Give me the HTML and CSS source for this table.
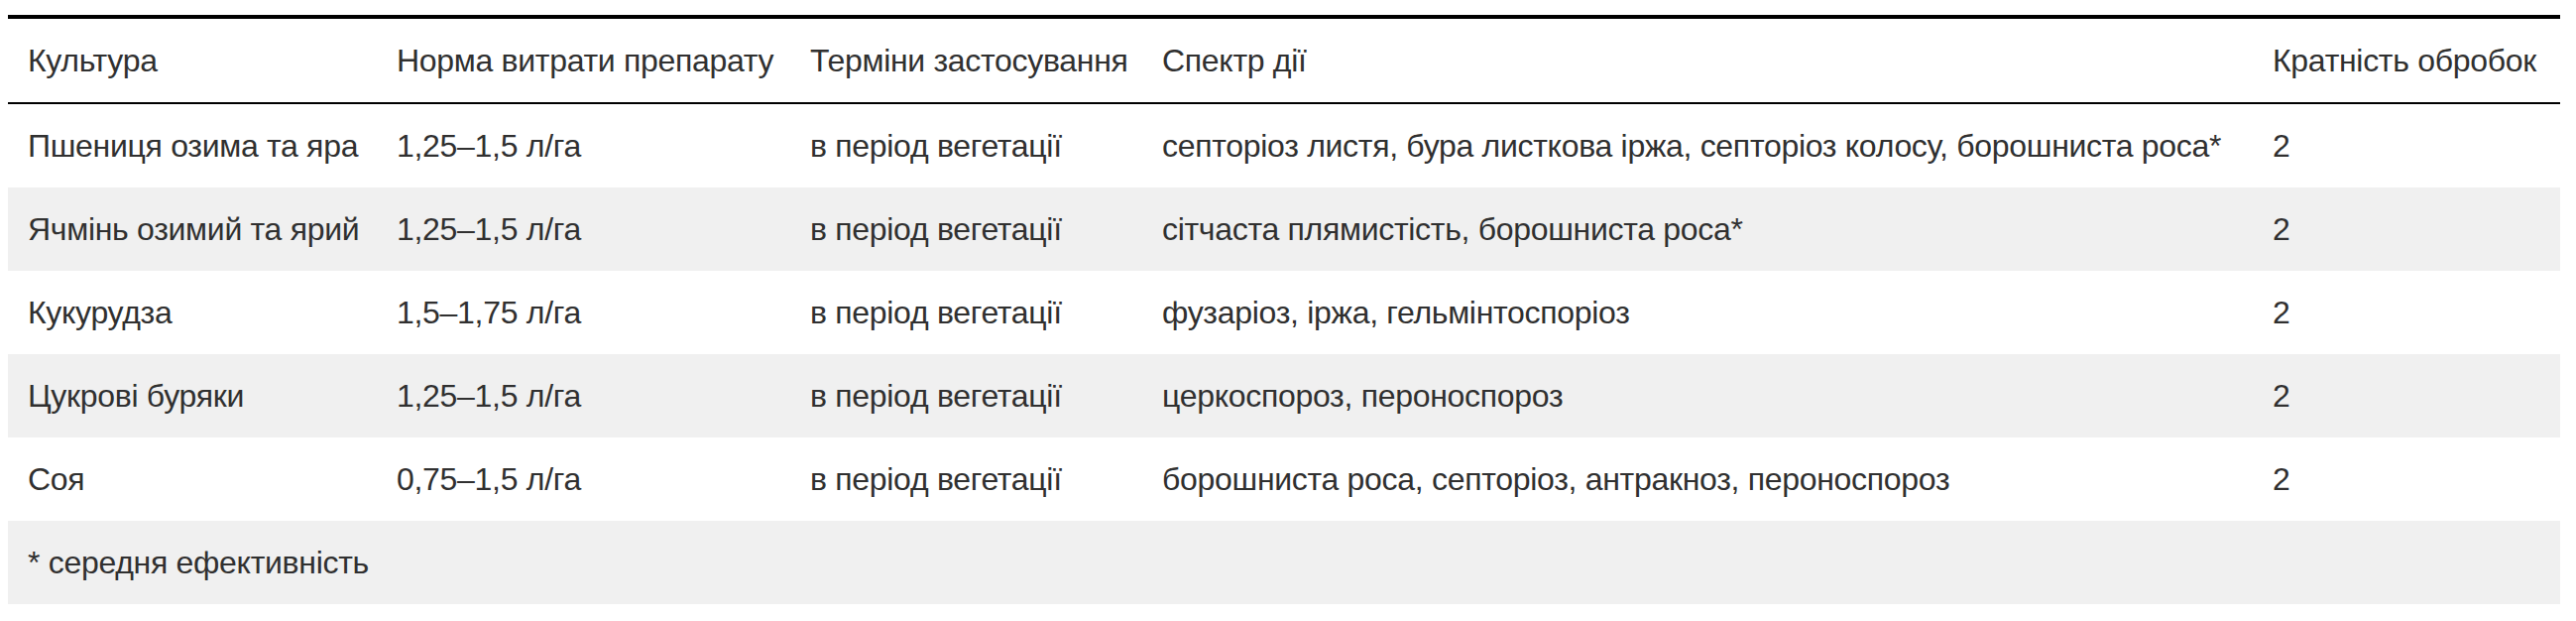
FILE: index.html
```html
<!DOCTYPE html>
<html lang="uk">
<head>
<meta charset="utf-8">
<title>Культура</title>
<link rel="stylesheet" href="styles.css">
</head>
<body>
<div class="wrap">
  <table class="usage">
    <colgroup>
      <col class="c-crop">
      <col class="c-rate">
      <col class="c-time">
      <col class="c-spec">
      <col class="c-count">
    </colgroup>
    <thead>
      <tr>
        <th>Культура</th>
        <th>Норма витрати препарату</th>
        <th>Терміни застосування</th>
        <th>Спектр дії</th>
        <th>Кратність обробок</th>
      </tr>
    </thead>
    <tbody>
      <tr>
        <td>Пшениця озима та яра</td>
        <td>1,25–1,5 л/га</td>
        <td>в період вегетації</td>
        <td>септоріоз листя, бура листкова іржа, септоріоз колосу, борошниста роса*</td>
        <td>2</td>
      </tr>
      <tr>
        <td>Ячмінь озимий та ярий</td>
        <td>1,25–1,5 л/га</td>
        <td>в період вегетації</td>
        <td>сітчаста плямистість, борошниста роса*</td>
        <td>2</td>
      </tr>
      <tr>
        <td>Кукурудза</td>
        <td>1,5–1,75 л/га</td>
        <td>в період вегетації</td>
        <td>фузаріоз, іржа, гельмінтоспоріоз</td>
        <td>2</td>
      </tr>
      <tr>
        <td>Цукрові буряки</td>
        <td>1,25–1,5 л/га</td>
        <td>в період вегетації</td>
        <td>церкоспороз, пероноспороз</td>
        <td>2</td>
      </tr>
      <tr>
        <td>Соя</td>
        <td>0,75–1,5 л/га</td>
        <td>в період вегетації</td>
        <td>борошниста роса, септоріоз, антракноз, пероноспороз</td>
        <td>2</td>
      </tr>
    </tbody>
    <tfoot>
      <tr>
        <td colspan="5">* середня ефективність</td>
      </tr>
    </tfoot>
  </table>
</div>
</body>
</html>
```
FILE: styles.css
```css
html, body {
  margin: 0;
  padding: 0;
  background: #ffffff;
}

.wrap {
  padding: 15px 16px 0 8px;
}

.usage {
  width: 100%;
  table-layout: fixed;
  border-collapse: separate;
  border-spacing: 0;
  font-family: "Liberation Sans", Arial, Helvetica, sans-serif;
  font-size: 32px;
  letter-spacing: -0.3px;
  line-height: 44px;
  color: #303030;
}

.c-crop { width: 372px; }
.c-rate { width: 417px; }
.c-time { width: 355px; }
.c-spec { width: 1120px; }
.c-count { width: 310px; }

.usage th,
.usage td {
  padding: 20px 20px;
  text-align: left;
  vertical-align: middle;
  white-space: nowrap;
  font-weight: normal;
}

.usage thead th {
  border-top: 4px solid #000;
  border-bottom: 2px solid #000;
}

.usage tbody tr:nth-child(even) td,
.usage tfoot td {
  background: #f0f0f0;
}
```
